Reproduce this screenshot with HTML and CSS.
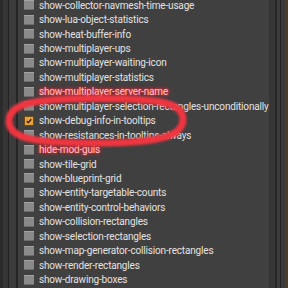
FILE: index.html
```html
<!DOCTYPE html>
<html lang="en">
<head>
    <meta charset="UTF-8">
    <title>Debug settings</title>
    <link rel="stylesheet" href="styles.css">
</head>
<body>
    <div class="frame">
        <div class="edge-left"></div>
        <div class="panel">
            <ul class="options">
                <li><span class="box"></span>show-collector-navmesh-time-usage</li>
                <li><span class="box"></span>show-lua-object-statistics</li>
                <li><span class="box"></span>show-heat-buffer-info</li>
                <li><span class="box"></span>show-multiplayer-ups</li>
                <li><span class="box"></span>show-multiplayer-waiting-icon</li>
                <li><span class="box"></span>show-multiplayer-statistics</li>
                <li class="marked"><span class="box"></span>show-multiplayer-server-name</li>
                <li><span class="box"></span>show-multiplayer-selection-rectangles-unconditionally</li>
                <li><span class="box checked"><svg viewBox="0 0 10 10"><path d="M2.2 5.2 L4.2 7 L7.8 2.8"/></svg></span>show-debug-info-in-tooltips</li>
                <li><span class="box"></span>show-resistances-in-tooltips-always</li>
                <li class="marked"><span class="box"></span>hide-mod-guis</li>
                <li><span class="box"></span>show-tile-grid</li>
                <li><span class="box"></span>show-blueprint-grid</li>
                <li><span class="box"></span>show-entity-targetable-counts</li>
                <li><span class="box"></span>show-entity-control-behaviors</li>
                <li><span class="box"></span>show-collision-rectangles</li>
                <li><span class="box"></span>show-selection-rectangles</li>
                <li><span class="box"></span>show-map-generator-collision-rectangles</li>
                <li><span class="box"></span>show-render-rectangles</li>
                <li><span class="box"></span>show-drawing-boxes</li>
            </ul>
        </div>
        <div class="edge-right"></div>
        <svg class="circle" viewBox="0 0 288 288">
            <defs>
                <filter id="soft"><feGaussianBlur stdDeviation="1.1"/></filter>
            </defs>
            <path d="M9,121 C9,104 31,98.5 96,98.5 C161,98.5 183,103 183,119 C183,136 161,143 96,143 C31,143 9,138 9,121 Z" filter="url(#soft)"/>
        </svg>
    </div>
</body>
</html>
```

FILE: styles.css
```css
body {
    margin: 0;
    background-color: #2b2b2b;
    font-family: Roboto, 'DejaVu Sans', sans-serif;
    overflow: hidden;
}

.frame {
    position: relative;
    display: flex;
    width: 288px;
    height: 288px;
}

/* window borders, drawn as stripes */
.edge-left {
    width: 18px;
    background: linear-gradient(to right,
        #2b2b2b 0 3px, #363636 3px 8px, #222 8px 9px,
        #3b3b3b 9px 16px, #262626 16px 18px);
}

.edge-right {
    width: 19px;
    background: linear-gradient(to right,
        #363636 0 6px, #262626 6px 8px, #3c3c3c 8px 11px,
        #232323 11px 12px, #3a3a3a 12px 16px, #4d3b29 16px 19px);
}

.panel {
    flex: 1;
    background-color: #414040;
    overflow: hidden;
}

.options {
    list-style: none;
    margin: -2px 0 0;
    padding: 0 0 0 6px;
    display: grid;
    grid-auto-rows: 14.45px;
}

.options li {
    display: flex;
    align-items: center;
    gap: 5px;
    font-size: 10px;
    letter-spacing: -0.17px;
    color: #e4e2e0;
    white-space: nowrap;
}

.box {
    flex: none;
    width: 10px;
    height: 8px;
    background-color: #8a8a8a;
    border-top: 1px solid #a2a2a2;
    border-bottom: 1px solid #6c6c6c;
}

.box.checked {
    width: 8px;
    height: 8px;
    background-color: #e9a13a;
    border: 1px solid #6b4a16;
}
.box svg {
    display: block;
    width: 8px;
    height: 8px;
}
.box path {
    fill: none;
    stroke: #2a1c08;
    stroke-width: 1.7;
}

.options li.marked {
    color: #ffc4c4;
    text-shadow: 0 0 2px #ee2d3a, 0 0 3px #ee2d3a, 0 0 5px #ee2d3a;
}

.circle {
    position: absolute;
    left: 0;
    top: 0;
    width: 288px;
    height: 288px;
    pointer-events: none;
}
.circle path {
    fill: none;
    stroke: #ef3440;
    stroke-width: 7;
}
```
